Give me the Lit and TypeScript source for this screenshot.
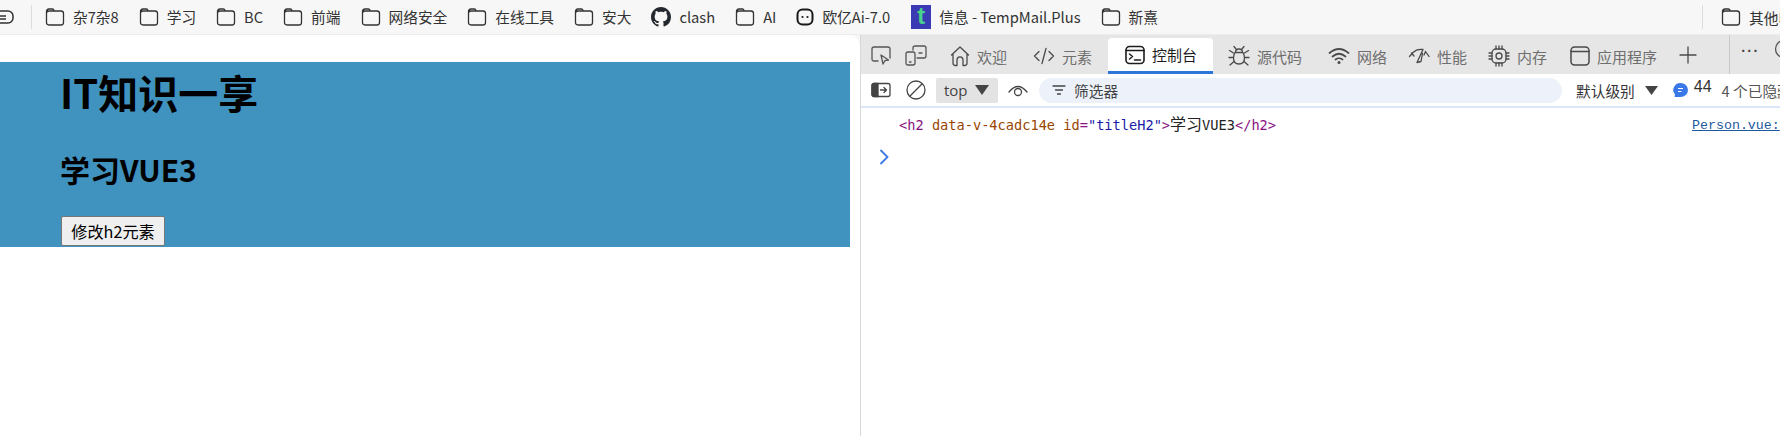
import { LitElement, html, css, svg } from "lit";
import { customElement } from "lit/decorators.js";

const s = (w: number, h: number, body: unknown, extra = "") =>
  html`<svg class=${extra} width=${w} height=${h} viewBox="0 0 ${w} ${h}" fill="none" stroke="currentColor" stroke-width="1.3" stroke-linecap="round" stroke-linejoin="round">${body}</svg>`;

const folder = () => s(20, 20, svg`<path d="M1.5 15.5V4.5Q1.5 2 4 2H7.5Q9 2 9 4H16Q18.5 4 18.5 6.5V15.5Q18.5 18 16 18H4Q1.5 18 1.5 15.5ZM1.5 6.2Q1.5 4 4 4H9"/>`, "ic-folder");
const github = () => html`<svg width="20" height="20" viewBox="0 0 16 16" fill="#24292f"><path d="M8 0C3.58 0 0 3.58 0 8c0 3.54 2.29 6.53 5.47 7.59.4.07.55-.17.55-.38 0-.19-.01-.82-.01-1.49-2.01.37-2.53-.49-2.69-.94-.09-.23-.48-.94-.82-1.13-.28-.15-.68-.52-.01-.53.63-.01 1.08.58 1.23.82.72 1.21 1.87.87 2.33.66.07-.52.28-.87.51-1.07-1.78-.2-3.64-.89-3.64-3.95 0-.87.31-1.59.82-2.15-.08-.2-.36-1.02.08-2.12 0 0 .67-.21 2.2.82.64-.18 1.32-.27 2-.27.68 0 1.36.09 2 .27 1.53-1.04 2.2-.82 2.2-.82.44 1.1.16 1.92.08 2.12.51.56.82 1.27.82 2.15 0 3.07-1.87 3.75-3.65 3.95.29.25.54.73.54 1.48 0 1.07-.01 1.93-.01 2.2 0 .21.15.46.55.38A8.013 8.013 0 0016 8c0-4.42-3.58-8-8-8z"/></svg>`;
const chat = () => html`<svg width="18" height="18" viewBox="0 0 18 18" fill="none"><rect x="1.5" y="1.5" width="15" height="15" rx="5" stroke="#1a1a1a" stroke-width="2"/><circle cx="6.5" cy="9" r="1.1" fill="#1a1a1a"/><circle cx="11.5" cy="9" r="1.1" fill="#1a1a1a"/></svg>`;

const icons: Record<string, () => unknown> = {
  home: () => s(20, 22, svg`<path d="M1.5 10 10 2l8.5 8M3 8.8V18q0 2.5 2.5 2.5H7V15q0-3.2 3-3.2t3 3.2v5.5h1.5Q17 20.500 17 18V8.800"/>`),
  code: () => s(22, 22, svg`<path d="M6 6.500 1.500 11 6 15.500M16 6.500l4.500 4.500L16 15.500M13 3.500l-4 15"/>`),
  console: () => s(20, 20, svg`<rect x="1" y="1.500" width="18" height="17" rx="3.500" stroke-width="1.600"/><path d="M1 5.500H19M4.500 9l3 2.500-3 2.500M9.500 15H15.500" stroke-width="1.500"/>`),
  bug: () => s(22, 22, svg`<path d="M7.500 7.500Q7.500 4 11 4t3.500 3.500M7 7.500h8Q16.500 10 16.500 13q0 6-5.500 6t-5.500-6Q5.500 10 7 7.500ZM8 4 6 1.500M14 4l2-2.500M5.500 8 1.500 5.500M16.500 8l4-2.500M5.500 12.500H1M16.500 12.500H21M6 16.500 2 20M16 16.500l4 3.500"/>`),
  wifi: () => s(22, 20, svg`<path d="M1.500 7Q11-1 20.500 7M4.500 10.500Q11 5 17.500 10.500M7.500 13.500Q11 11 14.500 13.500" stroke-width="1.700"/><circle cx="11" cy="16.500" r="1.500" fill="currentColor" stroke="none"/>`),
  perf: () => s(22, 20, svg`<path d="M1.500 10.500 5 6.500Q9 2.500 15 3.500M3.500 7 6 10M15 3.500 9 16.500 13 15.500 14.500 7.500M17.500 5.500 21 10.500M17.500 5.500 16 9"/>`),
  mem: () => s(22, 22, svg`<rect x="4" y="4" width="14" height="14" rx="4"/><circle cx="11" cy="11" r="3"/><path d="M8 1v3M11 1v3M14 1v3M8 18v3M11 18v3M14 18v3M1 8h3M1 11h3M1 14h3M18 8h3M18 11h3M18 14h3"/>`),
  app: () => s(20, 20, svg`<rect x="1" y="1" width="18" height="18" rx="3.500" stroke-width="1.500"/><path d="M1 5.500H19" stroke-width="1.500"/>`),
};

const bookmarks: { n: string; i: () => unknown }[] = [
  { n: "杂7杂8", i: folder }, { n: "学习", i: folder }, { n: "BC", i: folder }, { n: "前端", i: folder },
  { n: "网络安全", i: folder }, { n: "在线工具", i: folder }, { n: "安大", i: folder }, { n: "clash", i: github },
  { n: "AI", i: folder }, { n: "欧亿Ai-7.0", i: chat },
];

const tabs = [
  { n: "欢迎", i: "home", b: 43 },
  { n: "元素", i: "code", b: 32 },
  { n: "控制台", i: "console", b: 37, active: true },
  { n: "源代码", i: "bug", b: 37 },
  { n: "网络", i: "wifi", b: 32 },
  { n: "性能", i: "perf", b: 27 },
  { n: "内存", i: "mem", b: 27 },
  { n: "应用程序", i: "app", b: 27 },
];

@customElement("app-root")
export class AppRoot extends LitElement {
  static styles = css`
    :host { display: flex; flex-direction: column; width: 1780px; height: 436px; overflow: hidden; background: #fff;
      font-family: "Noto Sans CJK SC", "Open Sans", sans-serif; color: #000; }
    .bar { display: flex; align-items: center; height: 34px; background: #f7f7f7; border-bottom: 1px solid #ececec; flex: none; color: #333; font-size: 14.7px; white-space: nowrap; overflow: hidden; }
    .clip { flex: none; width: 15px; height: 20px; overflow: hidden; display: flex; justify-content: flex-end; margin-right: 16px; }
    .clip svg { flex: none; }
    .sep { flex: none; width: 1px; height: 24px; background: #dcdcdc; }
    .marks { display: flex; align-items: center; gap: 20px; margin-left: 13px; flex: 1; }
    .mark { display: flex; align-items: center; gap: 8px; line-height: 20px; flex: none; }
    .mark svg { flex: none; }
    .t { flex: none; width: 20px; height: 24px; margin-left: 1px; background: #3a3ab4; color: #46d18c; font: bold 24px/22px "Liberation Sans", sans-serif; text-align: center; }
    .more { display: flex; align-items: center; gap: 8px; margin-left: 18px; width: 59px; overflow: hidden; flex: none; }
    .more svg { flex: none; }
    .main { display: flex; flex: 1; min-height: 0; background: #f7f7f7; }
    .page { flex: none; width: 860px; background: #fff; border-top-right-radius: 12px; padding-top: 27px; box-sizing: border-box; }
    .hero { width: 850px; height: 185px; background: #4092bf; padding: 4px 0 0 60px; box-sizing: border-box; }
    h1 { margin: 0; font-size: 40px; font-weight: 700; line-height: 52px; }
    h2 { margin: 31px 0 0; font-size: 30px; font-weight: 700; line-height: 40px; }
    button { display: block; margin-top: 27px; margin-left: 1px; width: 104px; height: 30px; padding: 0; border: 1px solid #767676; border-radius: 2px; background: #efefef; font: 16.200px/26px "Noto Sans CJK SC", sans-serif; color: #000; }
    .dev { flex: 1; min-width: 0; background: #fff; border-left: 1px solid #d8d8d8; display: flex; flex-direction: column; overflow: hidden; }
    .tabs { display: flex; align-items: stretch; height: 39px; background: #e6e6e6; color: #6f6f6f; font-size: 15px; flex: none; white-space: nowrap; }
    .tabs > * { flex: none; }
    .tools { display: flex; align-items: center; gap: 14px; padding: 0 0 0 10px; color: #555; }
    .tab { display: flex; align-items: center; gap: 7px; padding: 0 16px 0 0; margin-top: 3px; box-sizing: border-box; }
    .tab.active { background: #fff; color: #1c1c1c; border-radius: 4px 4px 0 0; border-bottom: 3px solid #2b76d6; }
    .tab.active .box { color: #1c1c1c; }
    .box { display: flex; justify-content: flex-end; color: #4a4a4a; flex: none; }
    .plus { display: flex; align-items: center; margin-left: 5px; color: #4a4a4a; }
    .vline { width: 1px; background: #c8c8c8; margin-left: 31px; }
    .dots { display: flex; align-items: center; padding: 0 0 8px 11px; color: #444; font: bold 14px "Liberation Sans", sans-serif; letter-spacing: 1.500px; }
    .help { margin-left: 14px; margin-top: 4px; color: #555; }
    .toolbar { display: flex; align-items: center; height: 32px; flex: none; color: #444; font-size: 14px; white-space: nowrap; border-bottom: 2px solid #dbe7f8; overflow: hidden; }
    .toolbar > * { flex: none; }
    .sel { display: flex; align-items: center; gap: 7px; height: 25px; margin-left: 10px; padding: 0 7px 0 8px; width: 62px; box-sizing: border-box; background: #e3e3e3; border-radius: 2px; font: 15px "Open Sans", sans-serif; color: #444; }
    .tri { display: block; flex: none; }
    .filter { display: flex; align-items: center; gap: 8px; width: 523px; height: 25px; margin-left: 11px; padding-left: 13px; box-sizing: border-box; background: #edf2fa; border-radius: 12.500px; color: #444; font-size: 14.700px; }
    .level { margin-left: 14px; font-size: 14.700px; color: #333; }
    .badge { display: flex; align-items: center; margin-left: 15px; gap: 6px; }
    .n44 { font: 16px "Liberation Sans", sans-serif; color: #333; margin-top: -6px; }
    .hidden { margin-left: 10px; font-size: 14.700px; color: #555; }
    .tool-ic { margin-left: 10px; display: flex; }
    .tool-ic.wide { margin-left: 15px; }
    .tri.gap { margin-left: 10px; }
    .con { position: relative; flex: 1; }
    .log { display: flex; justify-content: space-between; padding: 7px 0 0 38px; font: 13.650px/20px "DejaVu Sans Mono", monospace; white-space: nowrap; color: #222; }
    .tag { color: #881280; }
    .an { color: #994500; }
    .av { color: #1a1aa6; }
    .br { color: #881280; }
    .cjk { font-family: "Noto Sans CJK SC", sans-serif; font-size: 16px; line-height: 1; }
    .src { font: 13.300px/20px "Liberation Mono", monospace; color: #1c5aa0; text-decoration: underline; width: 88px; overflow: hidden; margin-top: 1px; }
    .prompt { display: block; margin: 13px 0 0 18px; color: #3b78e7; }
  `;

  render() {
    return html`
      <div class="bar">
        <div class="clip"><svg width="24" height="20" viewBox="0 0 24 20" fill="none" stroke="#333" stroke-width="1.500"><rect x="2" y="4" width="20" height="12" rx="5"/><path d="M6 9H15M6 12H15"/></svg></div>
        <div class="sep"></div>
        <div class="marks">
          ${bookmarks.map((b) => html`<div class="mark">${b.i()}<span>${b.n}</span></div>`)}
          <div class="mark"><div class="t">t</div><span>信息 - TempMail.Plus</span></div>
          <div class="mark">${folder()}<span>新熹</span></div>
        </div>
        <div class="sep"></div>
        <div class="more">${folder()}<span>其他收藏夹</span></div>
      </div>
      <div class="main">
        <div class="page">
          <div class="hero">
            <h1>IT知识一享</h1>
            <h2>学习VUE3</h2>
            <button>修改h2元素</button>
          </div>
        </div>
        <div class="dev">
          <div class="tabs">
            <div class="tools">
              ${s(20, 20, svg`<path d="M7 16H3Q1 16 1 14V4Q1 2 3 2H17Q19 2 19 4V13M10 10l2 9 2-3.500 3.500-.500Z"/>`)}
              ${s(22, 22, svg`<path d="M8 6V4Q8 2 10 2H19Q21 2 21 4V12Q21 14 19 14H12M3 8H8Q10 8 10 10V19Q10 21 8 21H3Q1 21 1 19V10Q1 8 3 8ZM4.500 18H6M14 9H17"/>`)}
            </div>
            ${tabs.map((t) => html`<div class="tab ${t.active ? "active" : ""}">
              <div class="box" style="width:${t.b}px">${icons[t.i]()}</div><span>${t.n}</span></div>`)}
            <div class="plus">${s(20, 20, svg`<path d="M10 2V18M2 10H18"/>`)}</div>
            <div class="vline"></div>
            <div class="dots">···</div>
            <div class="help">${s(20, 20, svg`<circle cx="10" cy="10" r="8.500"/>`)}</div>
          </div>
          <div class="toolbar">
            <div class="tool-ic">${s(20, 16, svg`<rect x="1" y="1.500" width="18" height="13" rx="2"/><path d="M1 3.500Q1 1.500 3 1.500H7V14.500H3Q1 14.500 1 12.500Z" fill="currentColor"/><path d="M9.500 8H15M13 5.500 15.500 8 13 10.500"/>`)}</div>
            <div class="tool-ic wide">${s(20, 20, svg`<circle cx="10" cy="10" r="9"/><path d="M3.800 16.200 16.200 3.800"/>`)}</div>
            <div class="sel">top<svg class="tri" width="14" height="10" viewBox="0 0 14 10"><path d="M0 0H14L7 10Z" fill="#444"/></svg></div>
            <div class="tool-ic">${s(20, 14, svg`<path d="M1 9Q10-2 19 9"/><circle cx="10" cy="9" r="3.500"/>`)}</div>
            <div class="filter">${s(14, 12, svg`<path d="M1 2H13M3.500 6H10.500M5.500 10H8.500"/>`)}<span>筛选器</span></div>
            <div class="level">默认级别</div>
            <svg class="tri gap" width="13" height="9" viewBox="0 0 13 9"><path d="M0 0H13L6.500 9Z" fill="#444"/></svg>
            <div class="badge">
              <svg width="15" height="15" viewBox="0 0 15 15"><path d="M7.500 0a7.500 7 0 0 1 0 14H1.500L2 11.500A7.500 7 0 0 1 7.500 0Z" fill="#3b78e7"/><path d="M5 5.500H10M5 8.500H8.500" stroke="#fff" stroke-width="1.200"/></svg>
              <span class="n44">44</span>
            </div>
            <div class="hidden">4 个已隐藏</div>
          </div>
          <div class="con">
            <div class="log">
              <span><span class="br">&lt;</span><span class="tag">h2</span> <span class="an">data-v-4cadc14e</span> <span class="an">id</span><span class="br">=</span><span class="av">"titleH2"</span><span class="br">&gt;</span><span class="cjk">学习</span>VUE3<span class="br">&lt;/</span><span class="tag">h2</span><span class="br">&gt;</span></span>
              <span class="src">Person.vue:</span>
            </div>
            <svg class="prompt" width="10" height="16" viewBox="0 0 10 16" fill="none" stroke="currentColor" stroke-width="1.800"><path d="M1.500 1 8.500 8 1.500 15"/></svg>
          </div>
        </div>
      </div>
    `;
  }
}
